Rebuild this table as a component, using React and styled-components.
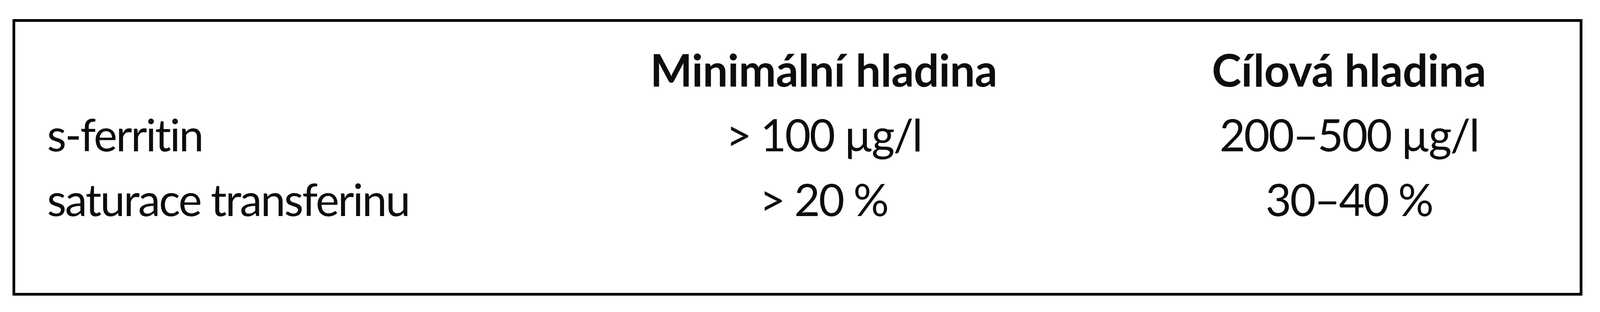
import { Fragment } from "react";
import styled, { createGlobalStyle } from "styled-components";

// the reference was drawn 4508px wide; horizontal sizes are kept relative to the viewport
const u = (px) => `${((px / 4508) * 100).toFixed(4)}vw`;

const GlobalStyle = createGlobalStyle`
  html, body {
    margin: 0;
    padding: 0;
    background: #ffffff;
  }
  body {
    font-family: Lato, "Open Sans", sans-serif;
    color: #0d0d0d;
  }
`;

const Page = styled.div`
  height: 800px;
  padding: 49px 0 0 ${u(35)};
  box-sizing: border-box;
`;

const Frame = styled.div`
  width: ${u(4424)};
  height: 709px;
  box-sizing: border-box;
  border: 7px solid #000000;
  padding: 39px 0 0 ${u(90)};
`;

const Grid = styled.div`
  display: grid;
  grid-template-columns: ${u(1308)} ${u(1200)} ${u(1200)};
  column-gap: ${u(280)};
  font-size: 114px;
  line-height: 166px;
`;

const Cell = styled.div`
  text-align: ${(p) => (p.$center ? "center" : "left")};
  font-weight: ${(p) => (p.$head ? 700 : 400)};
  letter-spacing: ${(p) => (p.$head ? "-0.005em" : "-0.03em")};
  white-space: nowrap;
`;

const rows = [
  ["s-ferritin", "> 100 µg/l", "200–500 µg/l"],
  ["saturace transferinu", "> 20 %", "30–40 %"],
];

export default function App() {
  return (
    <>
      <GlobalStyle />
      <Page>
        <Frame>
          <Grid>
            <Cell />
            <Cell $center $head>Minimální hladina</Cell>
            <Cell $center $head>Cílová hladina</Cell>
            {rows.map((r) => (
              <Fragment key={r[0]}>
                <Cell>{r[0]}</Cell>
                <Cell $center>{r[1]}</Cell>
                <Cell $center>{r[2]}</Cell>
              </Fragment>
            ))}
          </Grid>
        </Frame>
      </Page>
    </>
  );
}
